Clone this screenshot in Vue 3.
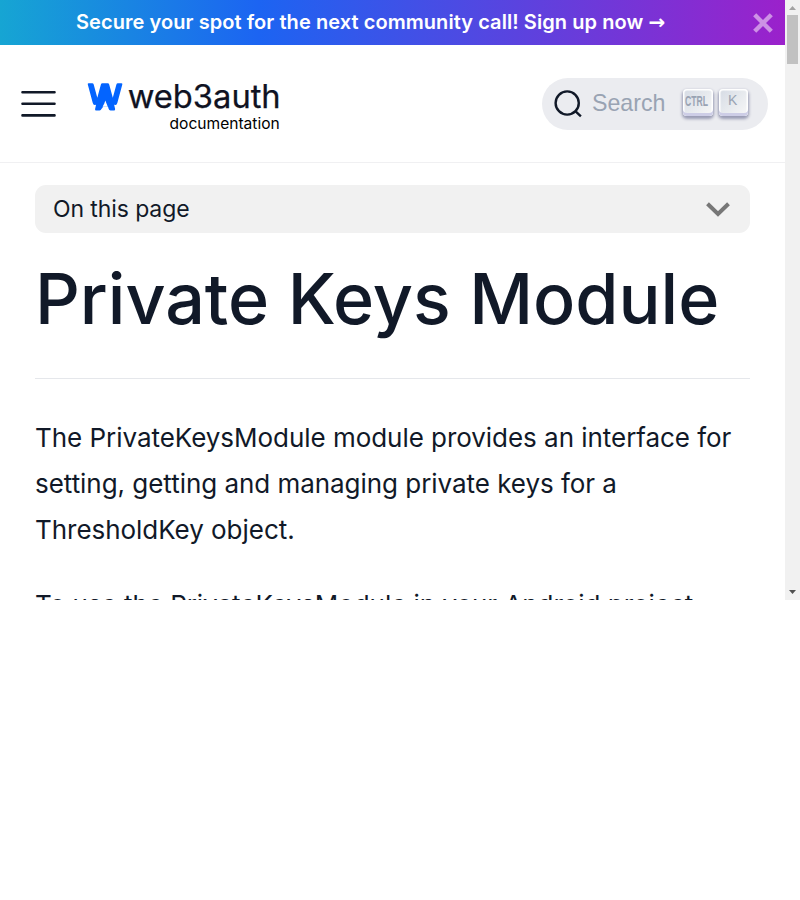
<script setup>
const paragraphs = [
  ['The PrivateKeysModule module provides an interface for', 'setting, getting and managing private keys for a', 'ThresholdKey object.'],
  ['To use the PrivateKeysModule in your Android project,'],
]
</script>

<template>
  <div class="viewport">
    <div class="page">
      <div class="announcement">
        <a class="announcement-text">Secure your spot for the next community call! Sign up now <span class="arrow-text">→</span></a>
        <svg class="close" viewBox="0 0 20 20"><path d="M1.7 1.7 18.3 18.3M18.3 1.7 1.7 18.3" /></svg>
      </div>
      <header class="navbar">
        <svg class="menu" viewBox="0 0 36 28"><path d="M1.5 2.2H33.5M1.5 13.8H33.5M1.5 25.4H33.5" /></svg>
        <svg class="logo" viewBox="0 0 194 52">
          <path class="mark" d="M1.8 1.2H5.2Q6.4 1.2 6.7 2.4L10.3 15.8 13.9 2.4Q14.2 1.2 15.4 1.2H20.7Q21.9 1.2 22.2 2.4L25.8 15.8 29.4 2.4Q29.7 1.2 30.9 1.2H34.3Q35.7 1.2 35.3 2.6L30.4 20.8Q29.5 24.2 27.1 22.5L28.1 26.9Q28.4 28.4 26.9 28.4H23.5Q22.1 28.4 21.7 27L21 24.8H16.2L14.4 27Q14 28.4 12.6 28.4H9.2Q7.7 28.4 8.1 26.9L9.1 22.5Q6.6 24.2 5.7 20.8L.8 2.6Q.4 1.2 1.8 1.2Z" />
          <path class="notch" d="M18.3 18.6 20.8 24.8H15.6L17.4 21.2Z" />
          <text class="brand" x="40.7" y="25.7" textLength="153" lengthAdjust="spacingAndGlyphs">web3auth</text>
          <text class="sub" x="82.5" y="46.7" textLength="110.3" lengthAdjust="spacingAndGlyphs">documentation</text>
        </svg>
        <button class="search">
          <svg class="search-icon" viewBox="0 0 28 28"><circle cx="13.2" cy="13" r="11.6" /><path d="m21.3 21.2 5.6 5.2" /></svg>
          <span class="placeholder">Search</span>
          <span class="keys">
            <kbd class="key"><svg class="ctrl" viewBox="0 0 24 20"><text x="0" y="15" textLength="23" lengthAdjust="spacingAndGlyphs">CTRL</text></svg></kbd>
            <kbd class="key"><span class="letter">K</span></kbd>
          </span>
        </button>
      </header>
      <main class="content">
        <button class="toc">
          <span>On this page</span>
          <svg class="chevron" viewBox="0 0 24 15"><path d="M1.5 1.8 12 12 22.5 1.8" /></svg>
        </button>
        <h1 class="title">Private Keys Module</h1>
        <hr class="rule">
        <p v-for="(lines, i) in paragraphs" :key="i" class="paragraph">
          <span v-for="line in lines" :key="line" class="line">{{ line }}</span>
        </p>
      </main>
    </div>
    <div class="scrollbar">
      <svg class="arrow up" viewBox="0 0 15 15"><path d="M4 10 7.5 6 11 10Z" /></svg>
      <div class="thumb"></div>
      <svg class="arrow down" viewBox="0 0 15 15"><path d="M4 5 11 5 7.5 9Z" /></svg>
    </div>
  </div>
</template>

<style>
body { margin: 0; background: #fff; }
</style>

<style scoped>
.viewport { display: flex; width: 800px; height: 600px; overflow: hidden; font-family: Inter, sans-serif; color: #111928; }
.page { width: 785px; height: 600px; overflow: hidden; background: #fff; }
.announcement { display: flex; align-items: center; height: 45px; padding-left: 76px; padding-right: 12px; box-sizing: border-box; background: linear-gradient(90deg, #16a5d3 0%, #1c64f2 33%, #9b21cb 100%); color: #fff; }
.announcement-text { flex: 1; font-size: 20px; font-weight: 600; line-height: 45px; letter-spacing: .065px; white-space: nowrap; }
.arrow-text { font-family: "Noto Sans", "DejaVu Sans", sans-serif; font-size: 20px; line-height: 20px; }
.close { width: 20px; height: 20px; fill: none; stroke: #cd91e5; stroke-width: 4.4; }
.navbar { display: flex; align-items: center; box-sizing: border-box; height: 118px; padding: 0 17px 0 21px; border-bottom: 1px solid #f0f0f2; }
.menu { width: 36px; height: 28px; flex: none; fill: none; stroke: #111928; stroke-width: 2.6; stroke-linecap: round; }
.logo { width: 194px; height: 52px; margin: 8px 0 0 30px; flex: none; overflow: visible; }
.mark { fill: #0364ff; }
.notch { fill: #fff; }
.brand { font-family: Inter, sans-serif; font-size: 32px; fill: #0f1222; stroke: #0f1222; stroke-width: .25; }
.sub { font-family: Inter, sans-serif; font-size: 15px; fill: #000; }
.search { display: flex; align-items: center; box-sizing: border-box; width: 226px; height: 52px; margin-left: auto; padding: 0 20px 0 12px; border: 0; border-radius: 26px; background: #ebecf0; }
.search-icon { width: 28px; height: 28px; flex: none; fill: none; stroke: #111928; stroke-width: 2.4; }
.placeholder { margin: -2px 0 0 10px; font: 23.2px/50px "Liberation Sans", sans-serif; color: #99a3b3; }
.keys { display: flex; gap: 6px; margin: -3px 0 0 auto; }
.key { display: flex; align-items: center; justify-content: center; box-sizing: border-box; width: 29.5px; height: 27px; padding-bottom: 3px; border-radius: 4px; background: linear-gradient(-225deg, #d5dbe4, #f8f8f8); box-shadow: inset 0 -3px 0 #cdcde6, inset 0 0 1px 1.5px #fff, 0 2px 3px 1px rgba(30, 35, 90, .4); }
.ctrl { width: 24px; height: 20px; flex: none; margin-left: -2px; overflow: visible; }
.ctrl text { font: 700 14.5px "Liberation Sans", sans-serif; fill: #99a3b3; }
.letter { padding-bottom: 1px; margin-left: -1px; font: 14px/20px "Liberation Sans", sans-serif; color: #99a3b3; }
.content { padding: 22px 35px 0; }
.toc { display: flex; align-items: center; justify-content: space-between; box-sizing: border-box; width: 715px; height: 48px; padding: 0 20.5px 0 18px; border: 0; border-radius: 11px; background: #f1f1f1; color: #111928; font: 23px/48px Inter, sans-serif; letter-spacing: -.1px; }
.chevron { width: 24px; height: 15px; fill: none; stroke: #777; stroke-width: 4; }
.title { margin: 22px 0 0; font-size: 70px; font-weight: 500; line-height: 88px; letter-spacing: -.04px; white-space: nowrap; }
.rule { height: 1px; margin: 35px 0 36px; border: 0; background: #e5e7eb; }
.paragraph { margin: 0 0 29px; font-size: 26px; line-height: 46px; letter-spacing: -.04px; }
.line { display: block; white-space: nowrap; }
.scrollbar { display: flex; flex-direction: column; width: 15px; height: 600px; background: #f1f1f1; }
.arrow { width: 15px; height: 15px; flex: none; }
.up { fill: #a3a3a3; }
.down { margin-top: auto; fill: #505050; }
.thumb { width: 11px; height: 49px; margin: 0 2px; background: #c1c1c1; }
</style>
